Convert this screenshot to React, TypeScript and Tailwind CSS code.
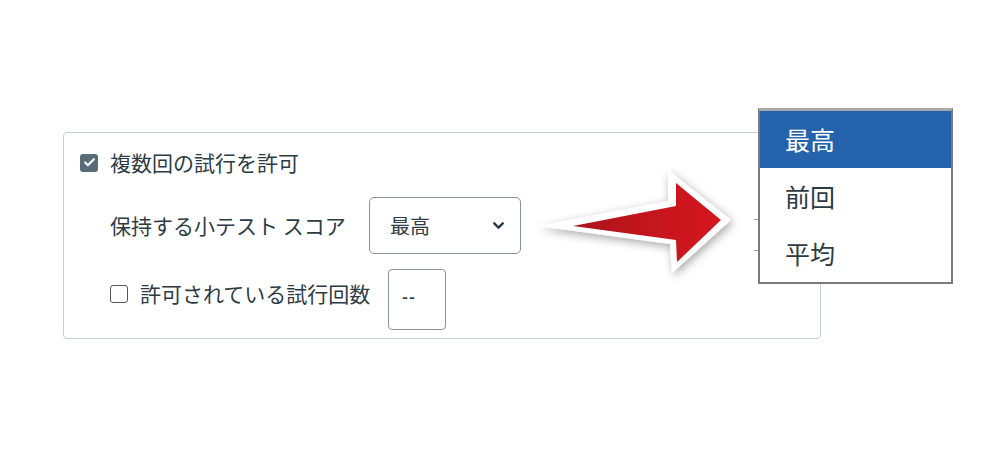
// App.tsx
// Quiz settings card with an open score dropdown and a callout arrow.

import { ChevronDown, Check } from 'lucide-react';

const font = 'font-["Noto_Sans_CJK_JP","Noto_Sans",sans-serif]';

const Arrow = () => (
  <svg
    className="absolute left-[520px] top-[150px] w-[240px] h-[140px]"
    viewBox="520 150 240 140"
  >
    <defs>
      <linearGradient id="red" x1="0" x2="1" y1="0" y2="0">
        <stop offset="0" stopColor="#a9141c" />
        <stop offset="0.6" stopColor="#c8151d" />
        <stop offset="1" stopColor="#d4171e" />
      </linearGradient>
      <filter id="shadow" x="-20%" y="-30%" width="140%" height="160%">
        <feDropShadow dx="2" dy="3" stdDeviation="5" floodColor="#000" floodOpacity="0.35" />
      </filter>
    </defs>
    <polygon
      points="538,226 668,201 668,170 731,220 672,273 670,244"
      fill="#fff"
      filter="url(#shadow)"
    />
    <polygon points="573,226 676,206 676,183 721,220 677,262 676,240" fill="url(#red)" />
  </svg>
);

const Dropdown = () => (
  <div
    className={`absolute left-[758px] top-[108px] w-[195px] flex flex-col border-2 border-t-[3px] border-[#7a7a7a] border-t-[#a8a8a8] bg-white text-[25px] leading-none ${font}`}
  >
    <div className="h-[57px] pl-[25px] flex items-center bg-[#2462ab] text-white">最高</div>
    <div className="h-[57px] pl-[25px] flex items-center text-[#2d3b45]">前回</div>
    <div className="h-[57px] pl-[25px] flex items-center text-[#2d3b45]">平均</div>
  </div>
);

export default function App() {
  return (
    <div className={`relative w-[1000px] h-[459px] bg-white overflow-hidden ${font}`}>
      <div className="pt-[132px] pl-[63px]">
        <div className="relative w-[758px] h-[207px] border border-[#c9ced2] rounded-[4px] pl-[16px] pt-[19px] text-[21px] leading-none text-[#2d3b45]">
          <div className="flex items-center gap-[12px]">
            <span className="w-[18px] h-[18px] rounded-[3px] bg-[#586b78] flex items-center justify-center">
              <Check size={13} strokeWidth={4} color="#fff" />
            </span>
            <span>複数回の試行を許可</span>
          </div>

          <div className="mt-[24px] pl-[30px] flex items-center">
            <span className="w-[259px]">保持する小テスト スコア</span>
            <div className="w-[152px] h-[57px] border border-[#8d9297] rounded-[5px] flex items-center justify-between pl-[20px] pr-[13px] text-[20px]">
              <span>最高</span>
              <ChevronDown size={17} strokeWidth={3.5} color="#2d3b45" />
            </div>
          </div>

          <div className="mt-[15px] pl-[30px] flex items-start">
            <span className="mt-[16px] w-[18px] h-[18px] rounded-[3px] border-[1.5px] border-[#555]" />
            <span className="mt-[14px] ml-[12px] w-[248px]">許可されている試行回数</span>
            <div className="w-[58px] h-[61px] border border-[#8d9297] rounded-[4px] pl-[13px] pt-[18px] text-[16px] font-bold tracking-[1px]">
              --
            </div>
          </div>

          <span className="absolute left-[690px] top-[86px] w-[4px] h-[1px] bg-[#9aa0a5]" />
          <span className="absolute left-[690px] top-[117px] w-[4px] h-[1px] bg-[#9aa0a5]" />
        </div>
      </div>

      <Arrow />
      <Dropdown />
    </div>
  );
}
